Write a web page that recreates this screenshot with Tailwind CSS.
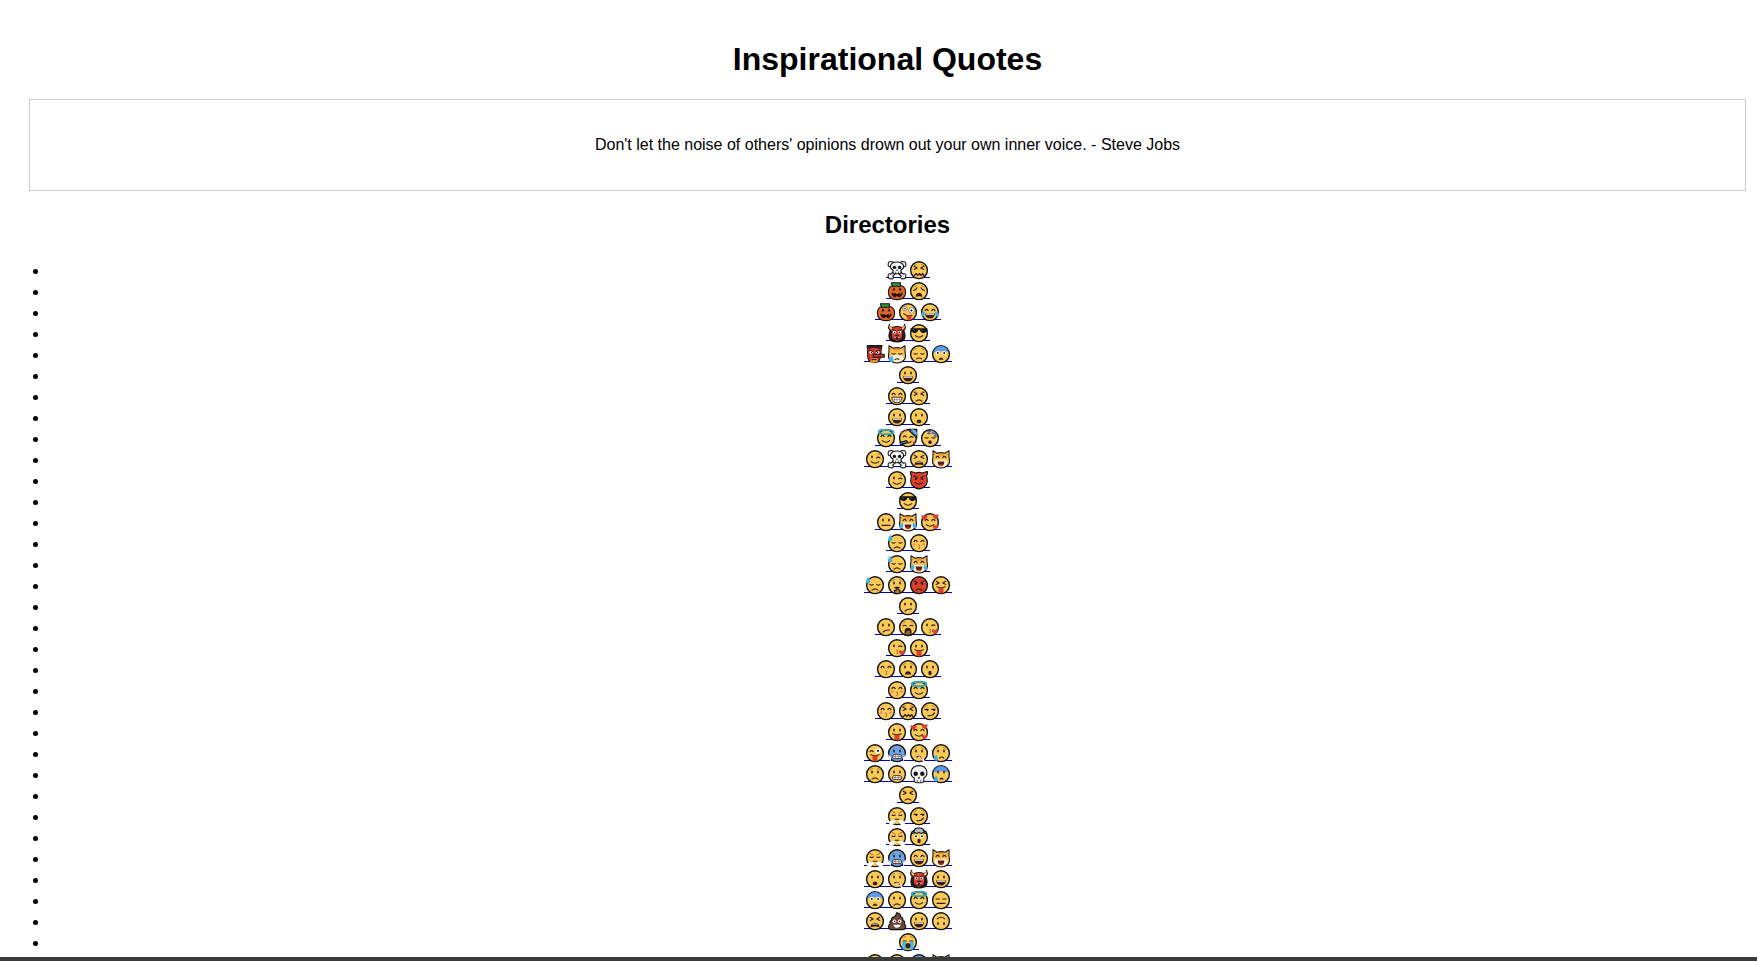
<!DOCTYPE html>
<html lang="en">
<head>
<meta charset="utf-8">
<meta name="viewport" content="width=device-width, initial-scale=1">
<title>Inspirational Quotes</title>
<script src="https://cdn.jsdelivr.net/npm/@tailwindcss/browser@4"></script>
</head>
<body class="flex h-screen flex-col overflow-hidden bg-white font-['Liberation_Sans',Arial,sans-serif] text-base text-black">
<main class="min-h-0 flex-1 overflow-hidden pt-[41px] pr-[11px] pl-[29px] text-center">
  <h1 class="text-[32px] leading-[37px] font-bold">Inspirational Quotes</h1>
  <div class="mt-[21px] border border-[#cccccc] px-5 py-9">
    <p class="leading-[18px]">Don't let the noise of others' opinions drown out your own inner voice. - Steve Jobs</p>
  </div>
  <h2 class="mt-5 text-2xl leading-[27px] font-bold">Directories</h2>
  <ul id="directories" class="mt-[22px] list-disc pl-5 leading-[21px]"></ul>
</main>
<footer class="h-1 shrink-0 bg-[#3a3a3a]"></footer>
<script>
// Every emoji is drawn around the origin, in a 22 x 21 cell.
const face = (c = '#fbc955') => `<circle r="8.4" fill="${c}" stroke="#141414" stroke-width="1.4"/>`;
const line = (d, c = '#33200c', w = 1.1) => `<path d="${d}" fill="none" stroke="${c}" stroke-width="${w}" stroke-linecap="round" stroke-linejoin="round"/>`;
const fill = (d, c) => `<path d="${d}" fill="${c}"/>`;
const inked = (d, c) => `<path d="${d}" fill="${c}" stroke="#141414" stroke-width="1.1" stroke-linejoin="round"/>`;
const eyes = '<ellipse cx="-3" cy="-2.3" rx=".9" ry="1.5" fill="#33200c"/><ellipse cx="3" cy="-2.3" rx=".9" ry="1.5" fill="#33200c"/>';
const happy = line('M-5-1.6Q-3.4-4-1.8-1.6M1.8-1.6Q3.4-4 5-1.6');
const shut = line('M-5-.6Q-3.4.5-1.8-.6M1.8-.6Q3.4.5 5-.6');
const flat = line('M-5-1.2H-1.6M1.6-1.2H5');
const brows = line('M-5.4-4Q-4.6-5.4-2.4-5.6M5.4-4Q4.6-5.4 2.4-5.6', '#b8791c', .9);
const angry = line('M-5-4.2L-1.6-2.4M5-4.2L1.6-2.4');
const squint = line('M-4.8-4L-1.8-2.2L-4.8-.7M4.8-4L1.8-2.2L4.8-.7');
const smile = line('M-3.8 2.4Q0 5.6 3.8 2.4');
const frown = line('M-3 5Q0 2.2 3 5');
const grin = fill('M-5 1H5Q4.4 6.4 0 6.4T-5 1', '#3b1d12') + fill('M-4.4 1.3H4.4L4 2.6H-4Z', '#fff');
const wail = fill('M-3.4 5.8Q-3 1.6 0 1.6T3.4 5.8Q0 4.4-3.4 5.8', '#3b1d12');
const gasp = '<ellipse cy="3.8" rx="1.7" ry="2.2" fill="#3b1d12"/>';
const teeth = '<rect x="-4.6" y="1.4" width="9.2" height="4" rx="1.8" fill="#fff" stroke="#3b1d12" stroke-width=".9"/>' + line('M-4 3.4H4M-1.8 1.6V5.2M1.8 1.6V5.2', '#55443a', .6);
const tongue = line('M-4.2 1.6Q0 3.4 4.2 1.6') + fill('M-2.5 2.6H2.5V6Q2.4 8.2 0 8.2T-2.5 6Z', '#df3b2d');
const kiss = line('M-.5 1.6Q2 2.4 .2 3.5Q2 4.6-.5 5.6', '#a45e18', .9);
const tear = fill('M-4.8 1.4Q-7.6 4.6-6.8 6.4Q-4.8 8.6-3 6.2Q-2.6 4.4-4.8 1.4', '#43b4e8');
const blueTop = fill('M-7.7-1.6A7.8 7.8 0 0 1 7.7-1.6Q0-4.2-7.7-1.6', '#5b9bed');
const halo = '<ellipse cy="-6.2" rx="7.4" ry="2.2" fill="none" stroke="#3ba6bb" stroke-width="1.9"/>';
const heart = '<path d="M0 1.3C-1.4-.8-3.7.1-2.8 2C-2 3.6 0 5 0 5S2 3.6 2.8 2C3.7.1 1.4-.8 0 1.3" fill="#e03c31"/>';
const blush = '<g fill="#f39268"><circle cx="-4.8" cy="1.4" r="1.5"/><circle cx="4.8" cy="1.4" r="1.5"/></g>';
const steam = fill('M-1 4Q-5 2.6-7.5 5Q-9 8-6 8.6Q-3 9-1 4M1 4Q5 2.6 7.5 5Q9 8 6 8.6Q3 9 1 4', '#fff');
const sweat = fill('M-6.6-8.4Q-9.8-4.8-8.8-2.8Q-6.8-.6-4.8-2.8Q-4.2-4.8-6.6-8.4', '#45b4e0');
const cat = inked('M-8-8.4L-4-6Q0-7.2 4-6L8-8.4V-2Q9.4 3 7.2 5.8Q4 8.8 0 8.8T-7.2 5.8Q-9.4 3-8-2Z', '#fbc34f')
  + fill('M-6.5 2Q-3.4-.4 0 1Q3.4-.4 6.5 2Q6.8 7.8 0 7.9Q-6.8 7.8-6.5 2', '#fff3da')
  + line('M-2-5.6V-3.6M0-6V-3.2M2-5.6V-3.6M-7.6-5.6L-6-4.4M7.6-5.6L6-4.4', '#d9741d', .9);
const catTears = fill('M-5 .4Q-9 2-8.6 5Q-6 7.2-4.6 4ZM5 .4Q9 2 8.6 5Q6 7.2 4.6 4Z', '#43b4e8');
const catGrin = fill('M-3.4 2.4H3.4Q3 7 0 7T-3.4 2.4', '#62190f') + fill('M-1.8 5.8Q0 4.4 1.8 5.8Q0 7.4-1.8 5.8', '#e0483b');
const skull = inked('M-4-.2Q-7.4-2-6.4-4.8Q-5-8.2 0-8.2T6.4-4.8Q7.4-2 4-.2V3.6H-4Z', '#f4f4f6')
  + '<g fill="#16161a"><circle cx="-2.6" cy="-2.8" r="1.7"/><circle cx="2.6" cy="-2.8" r="1.7"/><path d="M0-1.2L.9.5H-.9Z"/></g>' + line('M-1.4 1.8V3.4M1.4 1.8V3.4', '#222', .7);
const bone = 'M-6.8-6.4L6.8 6.4M6.8-6.4L-6.8 6.4M-7.4-5L-7.2-7L-5-7.2M7.4-5L7.2-7L5-7.2M-7.4 5L-7.2 7L-5 7.2M7.4 5L7.2 7L5 7.2';

const art = {
  '☠️': line(bone, '#141414', 4) + line(bone, '#f4f4f6', 1.9) + skull,
  '💀': inked('M-4.8 3.8Q-8.6 2.2-7.8-3Q-6.4-8.6 0-8.6T7.8-3Q8.6 2.2 4.8 3.8V7Q4.4 8.6 2.4 8.6H-2.4Q-4.4 8.6-4.8 7Z', '#f4f4f6')
    + '<g fill="#16161a"><circle cx="-3.3" cy="-.4" r="2.2"/><circle cx="3.3" cy="-.4" r="2.2"/><path d="M0 2L1.2 4.2H-1.2Z"/></g>' + line('M-1.8 6V8M1.8 6V8', '#222', .7),
  '😖': face() + brows + squint + line('M-4.8 5.4L-3 3.4L-1.2 5.2L.4 3.4L2.2 5.2L3.6 3.4L5 5.4', '#33200c', 1.4),
  '😩': face() + line('M-5.4-.8Q-3-1-2-3.4M5.4-.8Q3-1 2-3.4') + brows + wail,
  '🎃': inked('M0-5.4Q-8.6-7-8.6 1.2Q-8.4 8.4 0 8.4T8.6 1.2Q8.6-7 0-5.4', '#e0692a') + line('M-3-4Q-5.5 1-3 7.4M3-4Q5.5 1 3 7.4', '#b94b18', .8)
    + inked('M-5.6-8.4H3.4V-5H-4.6Z', '#2f9a3b') + fill('M-4.8-1L-3-3.6L-1.4-1ZM4.8-1L3-3.6L1.4-1ZM-6 1.4L-3.6 2.6L-1.8 1.8L0 3L1.8 1.8L3.6 2.6L6 1.4Q4.4 6.4 1.8 6L0 4.8L-1.8 6Q-4.4 6.4-6 1.4', '#241508'),
  '🤪': face() + '<g fill="#fff" stroke="#5b4a3a" stroke-width=".6"><circle cx="-3" cy="-3.6" r="2.2"/><circle cx="3.6" cy="-1.8" r="2.8"/></g><circle cx="-3" cy="-3.6" r=".8"/><circle cx="3.4" cy="-1.8" r="1"/>' + line('M-4.5 1.4Q-1 4.4 4 3.4') + fill('M-1.8 3.2L3 3.8Q4.2 8 2 8.4Q-1 8-1.8 3.2', '#df3b2d'),
  '😂': face() + happy + grin + fill('M-5-.6Q-9-.2-9 3Q-7.4 5.6-5.4 3.2ZM5-.6Q9-.2 9 3Q7.4 5.6 5.4 3.2Z', '#43b4e8'),
  '👹': inked('M-6.6-3Q-10 4-6 7.6Q0 10 6 7.6Q10 4 6.6-3Z', '#221a1a') + inked('M-4-6Q-8-5.2-7.4-9Q-10-4-5.6-2Q-6.6 4-4 6.6Q0 9.6 4 6.6Q6.6 4 5.6-2Q10-4 7.4-9Q8-5.2 4-6Q0-7.4-4-6', '#d8402f')
    + fill('M-7.6-8.4Q-8.4-4-5-4L-5-5.8Q-7.2-6-7.6-8.4M7.6-8.4Q8.4-4 5-4L5-5.8Q7.2-6 7.6-8.4', '#f4cf6c') + '<g fill="#fff"><circle cx="-2.6" cy="-1.2" r="1.6"/><circle cx="2.6" cy="-1.2" r="1.6"/></g><circle cx="-2.4" cy="-1" r=".7"/><circle cx="2.4" cy="-1" r=".7"/>'
    + line('M-4.6-3.8L-1.4-2.6M4.6-3.8L1.4-2.6M-1.4 2.2H1.4') + fill('M-3.6 4Q0 3 3.6 4L2.8 6.4H-2.8Z', '#3b0d0b') + fill('M-2.8 3.8L-2 5.8L-1.2 3.8M2.8 3.8L2 5.8L1.2 3.8', '#fff'),
  '😎': face() + fill('M-8.4-5H8.4V-3Q7-.2 3.6-.2Q1.2-.4.8-3.2H-.8Q-1.2-.4-3.6-.2Q-7-.2-8.4-3Z', '#111') + line('M-5.6-3.8L-4.4-2.4M2-3.8L3.2-2.4', '#777', .7) + smile,
  '👺': inked('M-8-8.6H7Q5.6-4 6 0Q5.4 8.4-.8 8.6Q-8 8-7.4 0Q-7-4-8-8.6', '#d83a30') + fill('M-7.2-8.2H6.2L5.2-5.2L-1-6.4L-6.4-5.2Z', '#33201e')
    + '<g fill="#fff"><circle cx="-3.8" cy="-2" r="1.5"/><circle cx="2.8" cy="-2" r="1.5"/></g><circle cx="-3.5" cy="-1.8" r=".6"/><circle cx="2.6" cy="-1.8" r=".6"/>' + line('M-5.8-4.2L-2-2.8M5-4.2L1.2-2.8') + inked('M-1.8 0H9.2V3H-1.8Z', '#c92e28') + fill('M-5 8Q-4.4 3.8-.8 3.8T3.2 7Q-1 9.4-5 8', '#ed9440') + line('M-3 5.6Q-1 4.4 1 5.6'),
  '😿': cat + shut + line('M-2 5.4Q0 3.6 2 5.4') + fill('M-5 1.4Q-9 4.8-7.4 7Q-4.8 9-3.2 6.4Q-3 4.4-5 1.4', '#43b4e8'),
  '😔': face() + brows + shut + line('M-2.4 4.6Q0 3 2.4 4.6'),
  '😨': face() + blueTop + '<g fill="#fff"><circle cx="-3.2" cy="-1.2" r="2"/><circle cx="3.2" cy="-1.2" r="2"/></g><circle cx="-3.2" cy="-1.2" r=".9"/><circle cx="3.2" cy="-1.2" r=".9"/>' + fill('M-2.6 5.6Q0 1.2 2.6 5.6Z', '#3b1d12'),
  '😀': face() + eyes + grin,
  '😁': face() + happy + '<path d="M-5.2 1H5.2Q4.6 6.6 0 6.6T-5.2 1" fill="#fff" stroke="#3b1d12" stroke-width=".9"/>' + line('M-4.6 3.4H4.6M-2.4 1V6M0 1V6.4M2.4 1V6', '#66574c', .5),
  '😣': face() + squint + line('M-5-5L-2-3.6M5-5L2-3.6', '#b8791c', .9) + line('M-3 5Q0 2.2 3 5'),
  '😃': face() + eyes + grin,
  '😦': face() + eyes + '<ellipse cy="4.2" rx="2.3" ry="1.9" fill="#3b1d12"/>',
  '😇': face() + halo + happy + smile,
  '🥳': face() + line('M-4.8-1.2Q-3.2-3.4-1.6-1.2M1.6-.8Q3.2-2.4 4.8-.8') + inked('M0-8.8H8.8V-.2Z', '#2f78bf') + fill('M3-8.6L5.6-8.6L8.8-5.4V-3Z', '#77c5de') + inked('M-8.2 4.4L-1.2 2.4L-.4 4.4L-7.4 6.4Z', '#49b6cf') + fill('M-7.6-6.6H-5.6V-4.6H-7.6ZM5 3H7V5H5ZM-3-8.4H-1.2V-6.6H-3Z', '#d43b62') + line('M-.4 4.4Q2 5 3 3'),
  '😴': face() + shut + '<ellipse cy="4" rx="1.7" ry="1.9" fill="#3b1d12"/>' + line('M-2.4-7H.6L-2.4-4.4H.6M2-7.4H4.6L2-5H4.6M4.2-4.4H7L4.2-2H7', '#4059b5', 1.1),
  '😉': face() + '<ellipse cx="-3" cy="-2.2" rx=".9" ry="1.4" fill="#33200c"/>' + line('M1.6-1.2Q3.2-3 5-1.4') + line('M2-5.2Q4-5.8 5.4-4.2', '#b8791c', .9) + smile,
  '😫': face() + squint + '<path d="M-4.6 6Q-4 1.6 0 1.6T4.6 6Q0 4.8-4.6 6" fill="#3b1d12"/>' + line('M-2.4 2.8H2.4', '#fff', .9),
  '😸': cat + happy + catGrin,
  '😈': inked('M-8.6-8.6Q-3.6-7.8-3.6-7.2Q0-8.4 3.6-7.2Q3.6-7.8 8.6-8.6Q8.6-5 7.4-4.2Q9.4 1 7 5Q3.6 8.7 0 8.7T-7 5Q-9.4 1-7.4-4.2Q-8.6-5-8.6-8.6', '#dc3f2d') + angry + '<circle cx="-3.2" cy="-1.2" r="1"/><circle cx="3.2" cy="-1.2" r="1"/>' + smile,
  '😐': face() + eyes + line('M-4 3.2H4'),
  '😹': cat + happy + catGrin + catTears,
  '🥰': face() + happy + smile + `<g transform="translate(-5.6 -7)">${heart}</g><g transform="translate(5.6 -8)">${heart}</g><g transform="translate(5.6 2.4)">${heart}</g>`,
  '😓': face() + sweat + shut + frown,
  '😚': face() + happy + blush + kiss,
  '🤫': face() + eyes + brows + line('M-2.4 2.4H2.4') + inked('M-.8 2.2H1V4.6L3 5V8.2L-1.8 8.6L-2.6 5.4L-.8 5Z', '#b97932'),
  '😡': face('#dc3f2d') + angry + '<circle cx="-3.2" cy="-1.4" r="1"/><circle cx="3.2" cy="-1.4" r="1"/>' + frown,
  '😝': face() + squint + tongue,
  '😕': face() + eyes + line('M-3 4.8Q-.6 2.4 3.6 2.8'),
  '🥱': face() + line('M-5-1.4Q-3.4-2.6-1.8-1.4M1.8-1.4Q3.4-2.6 5-1.4') + brows + '<ellipse cy="3.6" rx="3.2" ry="3" fill="#3b1d12"/>' + inked('M-2.8 4L1.6 2.4L3 4V7.4L-.8 8.4L-3 7Z', '#95622b'),
  '😘': face() + '<ellipse cx="-3" cy="-2.3" rx=".9" ry="1.4" fill="#33200c"/>' + line('M1.6-1.6Q3.2-3.2 5-1.6') + kiss + `<g transform="translate(5 2)">${heart}</g>`,
  '😛': face() + eyes + tongue,
  '😙': face() + happy + kiss,
  '😧': face() + eyes + brows + '<path d="M-3.2 5.4Q-2.8 2 0 2T3.2 5.4Z" fill="#3b1d12"/>',
  '😮': face() + eyes + gasp,
  '😏': face() + line('M-5-1.8H-2M1.8-1.8H5') + '<circle cx="-2.6" cy="-1.2" r=".9"/><circle cx="4" cy="-1.2" r=".9"/>' + brows + line('M-2 4.4Q3 5 4.4 1.6'),
  '😜': face() + line('M-5-1.6Q-3.4-3.6-1.8-1.6') + '<circle cx="3" cy="-2.4" r="2.6" fill="#fff"/><circle cx="3" cy="-2.4" r="1.1"/>' + tongue,
  '🥶': face('#68a5ef') + eyes + brows + teeth + fill('M-8.6 1L-6 4L-6 8L-8.4 6ZM8.6 1L6 4L6 8L8.4 6Z', '#e6f6ff'),
  '🤒': face() + eyes + brows + line('M-2.4 3.8Q0 2.2 2 4') + line('M.4 4L4.6 7', '#fff', 1.9) + line('M.8 4.2L3 5.8', '#d7352d', 1),
  '😢': face() + eyes + brows + line('M-1.6 4.8Q.6 2.8 2.8 4.8') + tear,
  '😟': face() + eyes + brows + frown,
  '😬': face() + eyes + teeth,
  '😰': face() + blueTop + eyes + '<path d="M-1.8 5.4Q.6 1.4 3 5.4Z" fill="#3b1d12"/>' + tear,
  '😤': face() + steam + line('M-5-1.2Q-3.4-.2-1.8-1.2M1.8-1.2Q3.4-.2 5-1.2M-1.8 3H1.8') + line('M-5.2-4.8L-1.8-3.2M5.2-4.8L1.8-3.2', '#a45e18', .9),
  '🤯': face() + '<g fill="#fff"><circle cx="-3" cy="-1" r="1.9"/><circle cx="3" cy="-1" r="1.9"/></g><circle cx="-3" cy="-1" r=".9"/><circle cx="3" cy="-1" r=".9"/>' + gasp + inked('M-7.6-3.6Q-8-6.2-4.6-6Q-5-9.4 0-9.2Q5-9.4 4.6-6Q8-6.2 7.6-3.6L4-4.6L2-3.6L0-4.8L-2-3.6L-4-4.6Z', '#b3bbc2'),
  '😄': face() + happy + grin,
  '🙁': face() + eyes + frown,
  '😑': face() + flat + line('M-4 3.2H4'),
  '💩': inked('M-.6-8.6Q4.4-7.6 3.4-4.4Q6.6-3.8 5.8-.6Q8.6 0 7.2 3Q9.4 4 8.4 6.8Q7.8 8.4 5.6 8.4H-5.6Q-8.2 8.4-8.4 6.4Q-9 3.6-6.8 3Q-8 0-5.4-.8Q-6-3.6-3-4.4Q-.4-5.4-.6-8.6', '#70473a')
    + '<g fill="#fff"><circle cx="-2.6" cy="0" r="1.8"/><circle cx="2.6" cy="0" r="1.8"/></g><circle cx="-2.4" cy=".1" r=".8"/><circle cx="2.4" cy=".1" r=".8"/>' + fill('M-3.6 3.6H3.6Q2.8 6.6 0 6.6T-3.6 3.6', '#fff'),
  '🙃': face() + `<g transform="rotate(180)">${eyes}${smile}</g>`,
  '😭': face() + flat + fill('M-5.6-.8H-2V8Q-4 8-5.6 6.6ZM5.6-.8H2V8Q4 8 5.6 6.6Z', '#45b4e8') + brows + '<ellipse cy="3.6" rx="2.4" ry="2.8" fill="#3b1d12"/>'
};

const directories = `☠️ 😖
🎃 😩
🎃 🤪 😂
👹 😎
👺 😿 😔 😨
😀
😁 😣
😃 😦
😇 🥳 😴
😉 ☠️ 😫 😸
😉 😈
😎
😐 😹 🥰
😓 😚
😓 😹
😓 🤫 😡 😝
😕
😕 🥱 😘
😘 😛
😙 😧 😮
😚 😇
😚 😖 😏
😛 🥰
😜 🥶 🤒 😢
😟 😬 💀 😰
😣
😤 😏
😤 🤯
😤 🥶 😄 😸
😦 🤒 👹 😀
😨 🙁 😇 😑
😫 💩 😃 🙃
😭
😀 😐 🥶 😸`.split('\n').map(row => row.split(' '));

document.getElementById('directories').innerHTML = directories.map(row => `
  <li class="h-[21px] pl-5"><a href="#" aria-label="${row.join('')}" class="inline-flex bg-[linear-gradient(#0000b4,#0000b4)] bg-[length:100%_1px] bg-[position:0_17px] bg-no-repeat align-top">${row.map(e =>
    `<svg class="h-[21px] w-[22px]" viewBox="-11 -10.2 22 21" aria-hidden="true">${art[e]}</svg>`).join('')}</a></li>`).join('');
</script>
</body>
</html>
